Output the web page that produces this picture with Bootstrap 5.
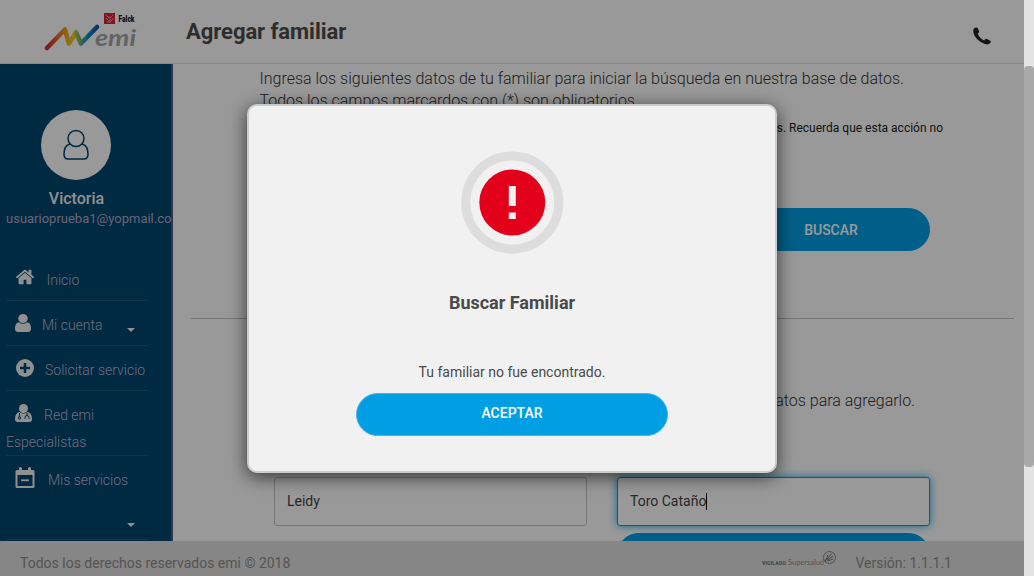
<!DOCTYPE html>
<html lang="es">
<head>
<meta charset="utf-8">
<meta name="viewport" content="width=device-width, initial-scale=1">
<title>Agregar familiar</title>
<link href="https://cdn.jsdelivr.net/npm/bootstrap@5.3.0/dist/css/bootstrap.min.css" rel="stylesheet">
<style>
body{font-family:Roboto,sans-serif;font-size:14px;color:#333;height:576px;overflow:hidden;background:#fff}
.page{height:576px;width:1024px}
.top{height:64px;flex:none;border-bottom:1px solid #e2e2e2;padding-left:43px}
.top h1{font-size:22px;line-height:26px;font-weight:700;letter-spacing:-.05px;color:#4c4c4c;margin:0 0 0 48px}
.side{width:173px;background:#00466e;border-right:2px solid #59597d;padding:46px 0 0 6px;overflow:hidden}
.avatar{width:70px;height:70px;background:#fff}
.uname{font-size:16px;font-weight:500;line-height:20px;color:#f0f0f0;margin:9px 0 0 1px}
.mail{font-size:13px;line-height:16px;color:#a9a9cb;white-space:nowrap;margin-top:2px}
.menu{width:142px;margin-top:29px}
.menu li{height:45px;border-bottom:1px solid #1d587e;color:#b8b8d6;font-size:14px;line-height:20px;font-weight:300;padding:14px 0 0 9px;white-space:nowrap}
.menu svg{flex:none;display:block}
.caret{width:0;height:0;border:4px solid transparent;border-top-color:#f0f0f0;border-bottom:0}
.main{overflow:hidden;padding:4px 10px 0 18px}
.intro{font-size:16px;line-height:22px;font-weight:300;color:#333;white-space:nowrap}
.note{font-size:12px;line-height:16px;color:#222}
.pill{height:43px;border-radius:22px;background:#009fe3;border:1px solid #45b5e4;color:#fff;font-size:14px;font-weight:500;line-height:20px;padding:0}
.field{height:49px;border:1px solid #c6c6c6;border-radius:3px;font-size:14px;color:#444;padding:0 12px}
.field.active{border-color:#009fe3;box-shadow:0 0 8px rgba(0,159,227,.9)}
.cursor{width:1px;height:17px;background:#000}
.foot{height:35px;background:#dfdfdf;color:#8d8d8d;font-size:14px;line-height:20px;padding:8px 72px 0 20px}
.rail{width:10px;height:576px;background:#e3e3e3;padding-top:66px}
.thumb{height:401px;border-radius:4px;background:#a9a9a9}
.shade{width:1024px;background:rgba(0,0,0,.4);z-index:5;padding:104px 0 0 247px}
.box{width:530px;height:369px;background:#f1f1f1;border:2px solid #ccc;border-radius:10px;box-shadow:0 4px 18px rgba(0,0,0,.65);padding-top:45px;color:#4a4a4a}
.box h2{font-size:18px;line-height:22px;font-weight:700;letter-spacing:0;margin:39px 0 48px}
.box .pill{width:312px}
</style>
</head>
<body class="d-flex">
<div class="page d-flex flex-column position-relative">
  <header class="top d-flex align-items-center">
    <svg width="95" height="44" viewBox="0 0 95 44" overflow="visible">
      <defs><linearGradient id="rb" gradientUnits="userSpaceOnUse" x1="3" y1="0" x2="56" y2="0"><stop offset="0" stop-color="#d81e35"/><stop offset=".35" stop-color="#ef9a23"/><stop offset=".5" stop-color="#f0cf20"/><stop offset=".66" stop-color="#64ad77"/><stop offset=".8" stop-color="#008ed0"/><stop offset="1" stop-color="#28469c"/></linearGradient></defs>
      <path d="M4 38 22 19.500 26 33.500 33 22.500 38 33.500 54 17" fill="none" stroke="url(#rb)" stroke-width="4.600" stroke-linecap="round" stroke-linejoin="round"/>
      <rect x="61" y="3" width="11" height="11" fill="#d52236"/><path d="M62.500 4.500l3.500 3.500v-2M70.500 4.500l-3.500 3.500v3M63 8l3.500 3.500M70.500 8l-4 5M64 12h2" fill="none" stroke="#f3b6bc" stroke-width=".8"/>
      <rect x="75" y="2" width="18" height="12" fill="#fff"/>
      <text x="75.500" y="11.500" font-size="9" font-weight="900" textLength="16" lengthAdjust="spacingAndGlyphs" fill="#111">Falck</text>
      <text x="52" y="36" font-family="Lato,sans-serif" font-style="italic" font-weight="700" font-size="23" textLength="41" lengthAdjust="spacingAndGlyphs" fill="#a5a5a5">emi</text>
    </svg>
    <h1>Agregar familiar</h1>
    <svg class="ms-auto" style="margin-right:33px;margin-top:9px" width="18" height="18" viewBox="0 0 18 18" fill="#222"><path d="M1 1.600C2 .2 4 0 4.700 1.100l1.300 3c.4 1-.2 1.600-1.400 2.500.8 2.700 3.600 5.900 6.600 7 .9-1.500 1.600-2 2.600-1.600l3.100 1.500c1.300.8 1 2-.2 3.100-1.500 1.300-4.300.9-7-.5C4.500 13.500.8 9 .3 4.800.1 3.500.4 2.400 1 1.600z"/></svg>
  </header>
  <div class="d-flex flex-fill overflow-hidden">
    <aside class="side flex-shrink-0">
      <div class="d-flex flex-column align-items-center" style="width:140px">
        <div class="avatar rounded-circle d-flex align-items-center justify-content-center">
          <svg width="28" height="32" viewBox="0 0 28 32" fill="none" stroke="#00466e" stroke-width="1.500"><circle cx="14" cy="9.500" r="8"/><path d="M8 15c-4 1-6 5-6 10 0 3 1.500 5 4 5h16c2.500 0 4-2 4-5 0-5-2-9-6-10"/></svg>
        </div>
        <div class="uname">Victoria</div>
      </div>
      <div class="mail">usuarioprueba1@yopmail.com</div>
      <ul class="menu list-unstyled mb-0">
        <li class="d-flex"><svg width="20" height="20" viewBox="0 0 1792 1792" fill="#f0f0f0" style="margin:-3px 11.500px 0 0"><path d="M1472 992v480q0 26-19 45t-45 19h-384v-384h-256v384h-384q-26 0-45-19t-19-45v-480q0-1 .5-3t.5-3l575-474 575 474q1 2 1 6zm223-69l-62 74q-8 9-21 11h-3q-13 0-21-7l-692-577-692 577q-12 8-24 7-13-2-21-11l-62-74q-8-10-7-23.500t11-21.500l719-599q32-26 76-26t76 26l244 204v-195q0-14 9-23t23-9h192q14 0 23 9t9 23v408l219 182q10 8 11 21.500t-7 23.500z"/></svg>Inicio</li>
        <li class="d-flex"><svg width="16" height="18" viewBox="256 128 1280 1536" preserveAspectRatio="none" fill="#f0f0f0" style="margin:-1px 11px 0 0"><path d="M1536 1399q0 109-62.500 187t-150.500 78h-854q-88 0-150.500-78t-62.500-187q0-85 8.500-160.500t31.500-152 58.500-131 94-89 134.500-34.500q131 128 313 128t313-128q76 0 134.500 34.500t94 89 58.500 131 31.500 152 8.500 160.500zm-256-887q0 159-112.500 271.500t-271.500 112.500-271.500-112.500-112.500-271.500 112.500-271.500 271.500-112.500 271.500 112.500 112.500 271.500z"/></svg>Mi cuenta<span class="caret" style="margin:13px 0 0 24px"></span></li>
        <li class="d-flex"><svg width="18" height="18" viewBox="0 0 18 18" style="margin:-1px 12px 0 .5px"><circle cx="9" cy="9" r="9" fill="#f0f0f0"/><path d="M9 4v10M4 9h10" stroke="#00466e" stroke-width="2.600"/></svg><span style="margin-left:-.5px">Solicitar servicio</span></li>
        <li style="height:65px"><div class="d-flex"><svg width="17" height="18" viewBox="0 0 17 18" style="margin:-1px 12px 0 0"><circle cx="8.500" cy="4.500" r="4.500" fill="#f0f0f0"/><path d="M4.500 8q4 3 8 0 4.500 1 4.500 7 0 3-2.500 3h-12Q0 18 0 15 0 9 4.500 8z" fill="#f0f0f0"/><path d="M4.500 9v4M12 9v3M10 15v-1.500q0-2 2-2t2 2V15" fill="none" stroke="#00466e"/><circle cx="4.500" cy="14" r="1.200" fill="none" stroke="#00466e"/></svg>Red emi</div><div style="margin:7px 0 0 -9px">Especialistas</div></li>
        <li style="height:84px"><div class="d-flex"><svg width="20" height="21" viewBox="0 0 20 21" style="margin:-3px 13px 0 0"><path fill-rule="evenodd" fill="#f0f0f0" d="M2 3h2V1q1.500-2 3 0v2h6V1q1.500-2 3 0v2h2q1.500 0 1.500 1.500v15Q19.500 21 18 21H2Q.5 21 .5 19.500v-15Q.5 3 2 3zm.5 5v11h15V8z"/><path d="M6 13.300h8" stroke="#f0f0f0" stroke-width="1.800"/></svg>Mis servicios</div><span class="caret d-block" style="margin:33px 0 0 112px"></span></li>
      </ul>
    </aside>
    <main class="main flex-fill">
      <div class="intro" style="padding-left:68.500px"><div style="letter-spacing:-.005px">Ingresa los siguientes datos de tu familiar para iniciar la búsqueda en nuestra base de datos.</div><div style="letter-spacing:-.015px">Todos los campos marcardos con (*) son obligatorios.</div></div>
      <div class="note text-end" style="margin:8px 71px 0 0">s. Recuerda que esta acción no</div>
      <div class="d-flex justify-content-end" style="margin:72px 84px 0 0"><button class="btn pill" style="width:198px;border-color:#009fe3">BUSCAR</button></div>
      <div style="height:1px;background:#c4c4c4;margin-top:67px"></div>
      <div class="intro text-end" style="margin:71px 99px 0 0">atos para agregarlo.</div>
      <div class="d-grid" style="grid-template-columns:313px 313px;column-gap:30px;row-gap:7px;margin:65px 0 0 83px">
        <div class="field d-flex align-items-center">Leidy</div>
        <div class="field active d-flex align-items-center">Toro Cataño<span class="cursor"></span></div>
        <span></span>
        <button class="btn pill" style="border-color:#009fe3" aria-label="Agregar"></button>
      </div>
    </main>
  </div>
  <footer class="foot d-flex flex-shrink-0 position-relative">
    <div style="padding-top:4px">Todos los derechos reservados emi © 2018</div>
    <svg class="ms-auto" style="margin-top:1px" width="76" height="18" viewBox="0 0 76 18"><text x="0" y="14.500" font-size="5.500" font-weight="900" textLength="24" lengthAdjust="spacingAndGlyphs" fill="#808080">VIGILADO</text><text x="26" y="14.500" font-family="Lato,sans-serif" font-size="8" textLength="36" lengthAdjust="spacingAndGlyphs" fill="#8c8c8c">Supersalud</text><circle cx="67.500" cy="7.500" r="6" fill="none" stroke="#858585"/><path d="M63 12l3-7M64.500 10l5-6.500M65 10.500l6-4.500M66 11l5-2" stroke="#707070"/></svg>
    <div style="padding-top:4px;margin-left:17px">Versión: 1.1.1.1</div>
  </footer>
  <div class="shade position-absolute top-0 start-0 h-100">
    <div class="box d-flex flex-column align-items-center" role="dialog">
      <svg width="102" height="102" viewBox="0 0 102 102" overflow="visible"><g transform="translate(.3 .5)"><circle cx="51" cy="51" r="46.500" fill="none" stroke="#ddd" stroke-width="9"/><circle cx="51" cy="51" r="33" fill="#e3001b"/><path d="M47.500 34.500h7v20h-7zM47.500 61h7v6.500h-7z" fill="#f1f1f1"/></g></svg>
      <h2>Buscar Familiar</h2>
      <div style="line-height:20px;margin-bottom:11px">Tu familiar no fue encontrado.</div>
      <button class="btn pill" style="padding-bottom:3px">ACEPTAR</button>
    </div>
  </div>
</div>
<div class="rail"><div class="thumb"></div></div>
<script src="https://cdn.jsdelivr.net/npm/bootstrap@5.3.0/dist/js/bootstrap.bundle.min.js"></script>
</body>
</html>
